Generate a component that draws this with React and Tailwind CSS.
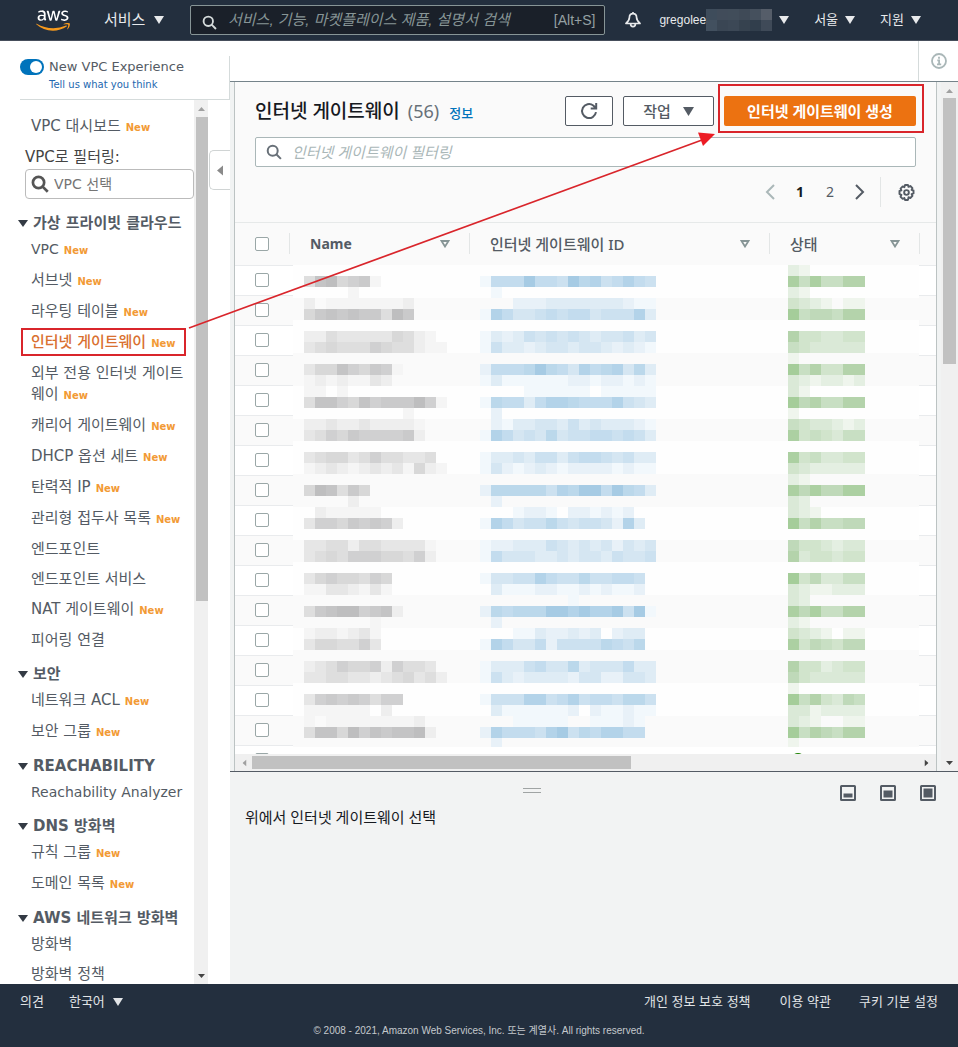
import React from "react";
import { FaAws } from "react-icons/fa";

const GRAYS = ["", "#f5f5f5", "#eeeeee", "#e6e6e6", "#dedede", "#d8d8d8", "#d0d0d1", "#cacacb", "#c4c4c5", "#bebebf"];
const BLUES = ["", "#f2f8fc", "#e8f1f8", "#dfecf5", "#d5e6f2", "#cce1f0", "#c3dcee", "#bbd8eb", "#b3d3e9", "#a6cbe4"];
const GREENS = ["", "#eff5ed", "#e4efe2", "#dae9d7", "#d1e4cc", "#c8dfc3", "#bfd9b9", "#b4d3ab", "#acd0a2", "#a5cd9a"];

// Shade levels of each 11px strip: [name, gateway id, state]
const STRIPS = [
  ["", "", "21"],
  ["4895671", "1666966597856865", "8585577"],
  ["00001", "01", "21"],
  ["2011111112", "0002223333333211", "4321011"],
  ["5787877497", "1864456566455583", "9566577"],
  ["", "", ""],
  ["224333335421", "1323545454344534", "7443344"],
  ["3454446544211", "1533234434432321", "5433333"],
  ["", "", "1"],
  ["355865761", "2666797648678473", "9574477"],
  ["12121132", "1311111122122121", "3212212"],
  ["11010", "0000111111011111", "31"],
  ["4886586777961", "1766368876668543", "9675577"],
  ["0000000001", "02", "1"],
  ["22322322221", "0213344353433321", "5433212"],
  ["34657666672", "1864547455665653", "8454355"],
  ["", "", ""],
  ["345534644334", "1334355356654533", "8453344"],
  ["1232123231521", "1421232122221211", "4322222"],
  ["", "", "21"],
  ["598475", "2777775879969763", "8686688"],
  ["00002", "02", "32"],
  ["02111110", "0001221022121200", "321"],
  ["366576762", "1864557545542830", "9575566"],
  ["", "", ""],
  ["334424433331", "1223335434342434", "6443233"],
  ["345466655462", "1644433434435445", "7344344"],
  ["", "", ""],
  ["35655465", "1445586557556650", "9463355"],
  ["11332131", "0311122112121120", "3211222"],
  ["", "0000000010", "32"],
  ["478996782", "2767779989889591", "8685577"],
  ["0000001", "02", "21"],
  ["1221231", "0001132232302330", "4321011"],
  ["3554463", "1864462555576570", "8465466"],
  ["", "", ""],
  ["234655626443", "1333564473444633", "7442344"],
  ["3344332345342", "1532333324422443", "6433333"],
  ["", "", "1"],
  ["367676466", "1555885685665775", "9574365"],
  ["11111102", "0311111120211211", "3312222"],
  ["10111111112", "0001111100111210", "3210011"],
  ["488596878892", "2866658957688660", "9576577"],
  ["", "02", "1"],
];

function Strip({ levels, x, y, shades }) {
  return [...levels].map((level, i) =>
    level === "0" ? null : <rect key={i} x={x + i * 11} y={y} width="11" height="11" fill={shades[Number(level)]} />
  );
}

function Mosaic() {
  return (
    <svg width="626" height="482" viewBox="0 0 626 482" shapeRendering="crispEdges" aria-hidden="true" className="absolute left-[58px] top-[42px]">
      {STRIPS.map(([name, id, state], k) => {
        const y = k * 11;
        const odd = Math.floor((y + 5) / 30) % 2 === 1;
        return (
          <g key={k}>
            <rect x="0" y={y} width="626" height="11" fill={odd ? "#fafafa" : "#fefefe"} />
            <Strip levels={name} x={11} y={y} shades={GRAYS} />
            <Strip levels={id} x={187} y={y} shades={BLUES} />
            <Strip levels={state} x={495} y={y} shades={GREENS} />
          </g>
        );
      })}
    </svg>
  );
}

function Caret({ className = "h-2 w-[10px]" }) {
  return (
    <svg viewBox="0 0 10 8" preserveAspectRatio="none" className={className} fill="currentColor" aria-hidden="true">
      <path d="M0 0h10L5 8z" />
    </svg>
  );
}

function Search({ className, strokeWidth = 2 }) {
  return (
    <svg viewBox="0 0 16 16" className={className} fill="none" stroke="currentColor" strokeWidth={strokeWidth} aria-hidden="true">
      <circle cx="6.7" cy="6.7" r="5" />
      <path d="m10.3 10.3 4.6 4.6" />
    </svg>
  );
}

const NAMEMASK = ["#3e4c5b", "#414c5a", "#414d5a", "#3f4a57", "#45505d", "#555d69", "#42505f", "#3a4654", "#3c4856", "#36424f", "#313e4c", "#3f4a58"];

function TopBar() {
  return (
    <header className="flex h-[41px] shrink-0 items-center border-b border-[#464e5b] bg-[#232f3e] pr-[37px] font-['Liberation_Sans','Noto_Sans_CJK_KR',sans-serif] text-[#e8eaec]">
      <a href="#home" aria-label="aws" className="ml-9">
        <svg width="0" height="0" className="absolute" aria-hidden="true">
          <defs>
            <linearGradient id="awsFill" x1="0" y1="0" x2="0" y2="1">
              <stop offset="0.63" stopColor="#fff" />
              <stop offset="0.63" stopColor="#f79a1c" />
            </linearGradient>
          </defs>
        </svg>
        <FaAws fill="url(#awsFill)" stroke="none" className="h-[27px] w-[34px]" />
      </a>
      <button className="ml-[34px] flex w-[60px] items-center justify-between whitespace-nowrap text-[15px]">
        서비스 <Caret />
      </button>
      <label className="ml-[26px] flex h-[30px] min-w-0 flex-1 items-center rounded-[2px] border border-[#879596] bg-[#1a2029] pl-[11px] pr-[9px]">
        <Search className="mt-1 h-[15px] w-[15px] shrink-0 text-[#d5dbdb]" />
        <input aria-label="검색" placeholder="서비스, 기능, 마켓플레이스 제품, 설명서 검색" className="ml-[11px] min-w-0 flex-1 bg-transparent text-[15px] italic outline-none placeholder:text-[#879596]" />
        <span className="text-sm text-[#95a0a3]">[Alt+S]</span>
      </label>
      <button aria-label="알림" className="ml-5">
        <svg viewBox="0 0 16 16" className="h-4 w-4" fill="none" stroke="currentColor" strokeWidth="1.7" strokeLinejoin="round" aria-hidden="true">
          <path d="M8 1.600C5.800 1.600 4.400 3.200 4.400 5.600c0 2.600-1.200 4-3.400 5.900h14c-2.200-1.900-3.400-3.300-3.400-5.900 0-2.400-1.400-4-3.600-4zM8 0v1.600M5.600 11.800c0 1.700 1 2.900 2.400 2.900s2.400-1.200 2.400-2.900" />
        </svg>
      </button>
      <button className="ml-[18px] flex items-center text-xs">
        gregolee
        <svg viewBox="0 0 66 22" className="h-[22px] w-[66px]" shapeRendering="crispEdges" aria-hidden="true">
          {NAMEMASK.map((c, i) => (
            <rect key={i} x={(i % 6) * 11} y={i < 6 ? 0 : 11} width="11" height="11" fill={c} />
          ))}
        </svg>
        <Caret className="ml-[7px] h-2 w-[10px]" />
      </button>
      <button className="ml-[25px] flex items-center gap-[7px] text-[13px]">서울 <Caret /></button>
      <button className="ml-[25px] flex items-center gap-[7px] text-[13px]">지원 <Caret /></button>
    </header>
  );
}

const SECTIONS = [
  {
    title: "가상 프라이빗 클라우드",
    items: [
      ["VPC", true],
      ["서브넷", true],
      ["라우팅 테이블", true],
      ["인터넷 게이트웨이", true],
      ["외부 전용 인터넷 게이트웨이", true],
      ["캐리어 게이트웨이", true],
      ["DHCP 옵션 세트", true],
      ["탄력적 IP", true],
      ["관리형 접두사 목록", true],
      ["엔드포인트", false],
      ["엔드포인트 서비스", false],
      ["NAT 게이트웨이", true],
      ["피어링 연결", false],
    ],
  },
  { title: "보안", items: [["네트워크 ACL", true], ["보안 그룹", true]] },
  { title: "REACHABILITY", items: [["Reachability Analyzer", false]] },
  { title: "DNS 방화벽", items: [["규칙 그룹", true], ["도메인 목록", true]] },
  { title: "AWS 네트워크 방화벽", items: [["방화벽", false], ["방화벽 정책", false]] },
];

function NavItem({ label, isNew }) {
  const active = label === "인터넷 게이트웨이";
  const size = /^[A-Za-z ]+$/.test(label) ? "text-[14px]" : "text-[15px]";
  const line = isNew ? "leading-[21px]" : "leading-[20px]";
  return (
    <li className={`relative mb-[10px] ${size} ${line}`}>
      <a href="#nav" className={active ? "font-medium text-[#d9702f]" : "text-[#545b64]"}>
        {label}
        {isNew && <span className="ml-[5px] text-[10px] font-bold leading-none text-[#f29a35]">New</span>}
      </a>
      {active && <span className="absolute -left-[10px] -top-1 h-7 w-[165px] border-2 border-[#d9252b]" />}
    </li>
  );
}

function Sidebar() {
  return (
    <aside className="flex w-[230px] shrink-0 flex-col bg-white pt-[15px] font-['DejaVu_Sans','Noto_Sans_CJK_KR',sans-serif]">
      <div className="ml-5 flex h-11 shrink-0 gap-[5px] border-b border-r border-[#d5dbdb] pt-[3px]">
        <button role="switch" aria-checked="true" aria-label="New VPC Experience" className="flex h-4 w-6 justify-end rounded-full bg-[#0073bb] p-[2px]">
          <span className="h-3 w-3 rounded-full bg-white" />
        </button>
        <div>
          <div className="text-[13px] leading-4 text-[#545b64]">New VPC Experience</div>
          <a href="#feedback" className="block text-[10px] leading-5 text-[#2368b0]">Tell us what you think</a>
        </div>
      </div>
      <div className="flex min-h-0 flex-1">
        <nav className="w-[194px] overflow-hidden pt-4">
          <ul className="pl-[31px]">
            <NavItem label="VPC 대시보드" isNew />
          </ul>
          <label htmlFor="vpc" className="block pl-[25px] text-[15px] leading-5 text-[#444]">VPC로 필터링:</label>
          <div className="ml-[25px] mt-[2px] flex h-[30px] items-center rounded-[4px] border border-[#bbb] pl-[5px]">
            <Search className="h-[18px] w-[18px] shrink-0 text-[#555]" strokeWidth={2.4} />
            <input id="vpc" placeholder="VPC 선택" className="ml-[5px] min-w-0 flex-1 bg-transparent text-sm outline-none placeholder:text-[#757575]" />
          </div>
          <div className="pt-[10px]">
            {SECTIONS.map((section) => (
              <section key={section.title} className="pt-1">
                <h2 className="mb-[6px] flex h-5 items-center gap-[5px] whitespace-nowrap pl-[18px] text-[15px] font-bold leading-5 text-[#545b64]">
                  <Caret className="h-[7px] w-[10px] shrink-0 text-[#333a44]" />
                  {section.title}
                </h2>
                <ul className="pl-[31px]">
                  {section.items.map(([label, isNew]) => (
                    <NavItem key={label} label={label} isNew={isNew} />
                  ))}
                </ul>
              </section>
            ))}
          </div>
        </nav>
        <div className="flex w-[14px] flex-col items-center bg-[#f0f0f0] pb-[6px] pt-[7px]">
          <Caret className="h-1 w-[7px] shrink-0 rotate-180 text-[#a0a0a0]" />
          <div className="ml-[2px] mt-[6px] h-[484px] w-3 bg-[#c1c1c1]" />
          <Caret className="mt-auto h-1 w-[7px] shrink-0 text-[#444]" />
        </div>
        <button aria-label="접기" className="ml-px mt-[50px] flex h-10 w-[21px] items-center justify-center rounded-l-[5px] border border-r-0 border-[#d0d4d4] bg-white">
          <svg viewBox="0 0 6 10" className="h-[11px] w-[6px] text-[#8a8a8a]" fill="currentColor" aria-hidden="true"><path d="M6 0v10L0 5z" /></svg>
        </button>
      </div>
    </aside>
  );
}

function Box({ label }) {
  return <input type="checkbox" aria-label={label} className="block h-[14px] w-[14px] appearance-none rounded-[2px] border border-[#9aa7a7] bg-white" />;
}

function HeadCell({ children, className }) {
  return (
    <th scope="col" className={`${className} p-0 text-left`}>
      <div className="flex h-[21px] items-center justify-between border-r border-[#e3e6e6] pl-5 pr-[19px]">
        {children}
        <svg viewBox="0 0 10 8" className="h-2 w-[10px] text-[#879596]" fill="none" stroke="currentColor" strokeWidth="1.800" aria-hidden="true"><path d="M1.500 1h7L5 6.500z" /></svg>
      </div>
    </th>
  );
}

const ROWS = Array.from({ length: 17 }, (_, i) => i + 1);

function Gateways() {
  return (
    <div className="flex min-h-0 flex-1 bg-[#f1f3f3] pl-1">
      <section className="flex min-w-0 flex-1 flex-col border-x border-[#bcc3c3] bg-[#fafafa]">
        <div className="px-5 pt-[14px]">
          <div className="flex h-[30px] items-center">
            <h1 className="mr-auto flex items-baseline gap-2 whitespace-nowrap text-[19px] font-medium text-[#16191f]">
              인터넷 게이트웨이 <span className="text-lg font-normal text-[#687078]">(56)</span>
              <a href="#info" className="ml-[2px] text-[13px] font-medium text-[#0073bb]">정보</a>
            </h1>
            <button aria-label="새로 고침" className="flex h-[30px] w-12 items-center justify-center rounded-[2px] border border-[#545b64] bg-white text-[#545b64]">
              <svg viewBox="0 0 18 18" className="h-[18px] w-[18px]" fill="none" stroke="currentColor" strokeWidth="2" aria-hidden="true">
                <path d="M16 10.200A7 7 0 1 1 13.300 3.500l2.200 2.300M16.200 1v5.500h-5.500" />
              </svg>
            </button>
            <button className="ml-[10px] flex h-[30px] w-[91px] items-center justify-center gap-3 rounded-[2px] border border-[#545b64] bg-white text-[15px] font-medium text-[#545b64]">
              작업 <Caret className="h-[9px] w-[11px]" />
            </button>
            <span className="relative ml-[10px]">
              <button className="h-[30px] w-[192px] rounded-[2px] bg-[#ec7211] text-[15px] font-bold text-white">인터넷 게이트웨이 생성</button>
              <span className="pointer-events-none absolute -bottom-[7px] -left-[6px] -right-2 -top-3 border-2 border-[#d9252b]" />
            </span>
          </div>
          <label className="mt-[11px] flex h-[30px] items-center rounded-[2px] border border-[#aab7b8] bg-white pl-[10px]">
            <Search className="h-4 w-4 shrink-0 text-[#687078]" />
            <input aria-label="필터" placeholder="인터넷 게이트웨이 필터링" className="ml-[10px] min-w-0 flex-1 bg-transparent text-[15px] italic outline-none placeholder:text-[#aab7b8]" />
          </label>
          <div className="mb-[15px] mt-[10px] flex h-[30px] items-center justify-end pr-px text-sm text-[#545b64]">
            <button aria-label="이전" className="text-[#aab7b8]">
              <svg viewBox="0 0 10 16" className="h-4 w-[10px]" fill="none" stroke="currentColor" strokeWidth="2" aria-hidden="true"><path d="M9 1 2 8l7 7" /></svg>
            </button>
            <button className="ml-[10px] w-[30px] font-bold text-[#16191f]">1</button>
            <button className="w-[30px]">2</button>
            <button aria-label="다음" className="ml-[10px]">
              <svg viewBox="0 0 10 16" className="h-4 w-[10px]" fill="none" stroke="currentColor" strokeWidth="2" aria-hidden="true"><path d="m1 1 7 7-7 7" /></svg>
            </button>
            <button aria-label="환경 설정" className="ml-[15px] flex h-[30px] items-center border-l border-[#e3e6e6] pl-[17px]">
              <svg viewBox="0 0 16 16" className="h-[17px] w-[17px]" fill="none" stroke="currentColor" strokeWidth="1.800" strokeLinejoin="round" aria-hidden="true">
                <path d="M6.600 1h2.800l.5 1.700 1.700-.8 2 2-.8 1.600 1.800.6v2.800l-1.800.6.8 1.700-2 2-1.700-.8L9.400 15H6.600L6 13.200l-1.600.8-2-2 .8-1.700L1.400 9.500V6.600L3.200 6l-.8-1.700 2-2L6 3z" />
                <circle cx="8" cy="8" r="2.200" />
              </svg>
            </button>
          </div>
        </div>
        <div className="relative min-h-0 flex-1 overflow-hidden border-t border-[#e6e9e9] bg-white">
          <table className="w-full table-fixed border-collapse text-[15px] text-[#545b64]">
            <thead>
              <tr className="h-[42px] bg-[#fafafa]">
                <th scope="col" className="w-[55px] p-0"><div className="flex h-[21px] items-center border-r border-[#e3e6e6] pl-5"><Box label="모두 선택" /></div></th>
                <HeadCell className="w-[180px] text-sm font-bold">Name</HeadCell>
                <HeadCell className="w-[300px] font-medium">인터넷 게이트웨이 ID</HeadCell>
                <HeadCell className="w-[150px] font-medium">상태</HeadCell>
                <td className="p-0" />
              </tr>
            </thead>
            <tbody>
              {ROWS.map((n) => (
                <tr key={n} className="h-[30px] border-t border-[#e9ebed] even:bg-[#fafafa]">
                  <td className="p-0 pl-5"><Box label={`행 ${n} 선택`} /></td>
                  <td className="p-0" />
                  <td className="p-0" />
                  <td className="p-0 pl-[21px]"><span className="block h-[14px] w-[14px] rounded-full border-2 border-[#1d8102]" /></td>
                  <td className="p-0" />
                </tr>
              ))}
            </tbody>
          </table>
          <Mosaic />
        </div>
        <div className="flex h-[17px] shrink-0 items-center bg-[#f0f0f0] px-[6px]">
          <Caret className="h-1 w-[7px] rotate-90 text-[#a0a0a0]" />
          <div className="ml-1 h-[13px] w-[55%] bg-[#c1c1c1]" />
          <Caret className="ml-auto h-1 w-[7px] -rotate-90 text-[#444]" />
        </div>
      </section>
      <div className="ml-1 flex w-[17px] flex-col items-center bg-[#f0f0f0] pb-[6px] pt-[7px]">
        <Caret className="h-1 w-[7px] rotate-180 text-[#a0a0a0]" />
        <div className="mt-[5px] h-[266px] w-[13px] bg-[#c1c1c1]" />
        <Caret className="mt-auto h-1 w-[7px] text-[#444]" />
      </div>
    </div>
  );
}

function PanelIcon({ label, y }) {
  return (
    <button aria-label={label}>
      <svg viewBox="0 0 16 16" className="h-4 w-4" aria-hidden="true">
        <rect x="1" y="1" width="14" height="14" rx="0.500" fill="#f2f3f3" stroke="#545b64" strokeWidth="2" />
        <rect x="3.500" y={y} width="9" height={12.5 - y} fill="#545b64" />
      </svg>
    </button>
  );
}

function SplitPanel() {
  return (
    <section className="h-[213px] shrink-0 border-t border-[#545b64] bg-[#f2f3f3] pl-[15px] pr-[22px] pt-[13px]">
      <div className="flex items-start">
        <div className="flex flex-1 justify-center pr-[22px] pt-[3px]">
          <div className="h-[5px] w-[18px] border-y border-[#a0a4a4]" />
        </div>
        <div className="flex gap-6">
          <PanelIcon label="작게" y={8.5} />
          <PanelIcon label="중간" y={5.5} />
          <PanelIcon label="전체" y={3.5} />
        </div>
      </div>
      <h2 className="mt-[6px] text-[15px] leading-5 text-[#16191f]">위에서 인터넷 게이트웨이 선택</h2>
    </section>
  );
}

function Footer() {
  return (
    <footer className="h-[63px] shrink-0 bg-[#232f3e] px-5 pt-2 font-['Liberation_Sans','Noto_Sans_CJK_KR',sans-serif] text-[13px] leading-5 text-[#e1e4e6]">
      <div className="flex">
        <a href="#feedback">의견</a>
        <button className="ml-[25px] flex items-center gap-2">한국어 <Caret /></button>
        <a href="#privacy" className="ml-auto">개인 정보 보호 정책</a>
        <a href="#terms" className="ml-[29px]">이용 약관</a>
        <a href="#cookies" className="ml-7">쿠키 기본 설정</a>
      </div>
      <p className="mt-[9px] text-center text-[10px] text-[#c4c9cd]">© 2008 - 2021, Amazon Web Services, Inc. 또는 계열사. All rights reserved.</p>
    </footer>
  );
}

export default function App() {
  return (
    <div className="relative flex h-screen flex-col overflow-hidden bg-white">
      <TopBar />
      <div className="flex min-h-0 flex-1">
        <Sidebar />
        <main className="flex min-w-0 flex-1 flex-col font-['Noto_Sans','Noto_Sans_CJK_KR',sans-serif]">
          <div className="flex h-[41px] shrink-0 justify-end border-b border-[#75838a]">
            <button aria-label="정보" className="flex w-10 items-center justify-center border-l border-[#d5dbdb] text-[#aab7b8]">
              <svg viewBox="0 0 16 16" className="h-4 w-4" fill="none" stroke="currentColor" aria-hidden="true">
                <circle cx="8" cy="8" r="7" strokeWidth="1.800" />
                <path d="M8 3.700v2M6.300 7.300h1.800v4M6 11.400h4.200" strokeWidth="1.800" />
              </svg>
            </button>
          </div>
          <Gateways />
          <SplitPanel />
        </main>
      </div>
      <Footer />
      <svg width="958" height="400" viewBox="0 0 958 400" aria-hidden="true" className="pointer-events-none absolute left-0 top-0">
        <path d="M189 328 702 140" stroke="#d9252b" strokeWidth="1.700" />
        <path d="m698 132.500 17 1.500-12 12z" fill="#ec1c24" />
      </svg>
    </div>
  );
}
